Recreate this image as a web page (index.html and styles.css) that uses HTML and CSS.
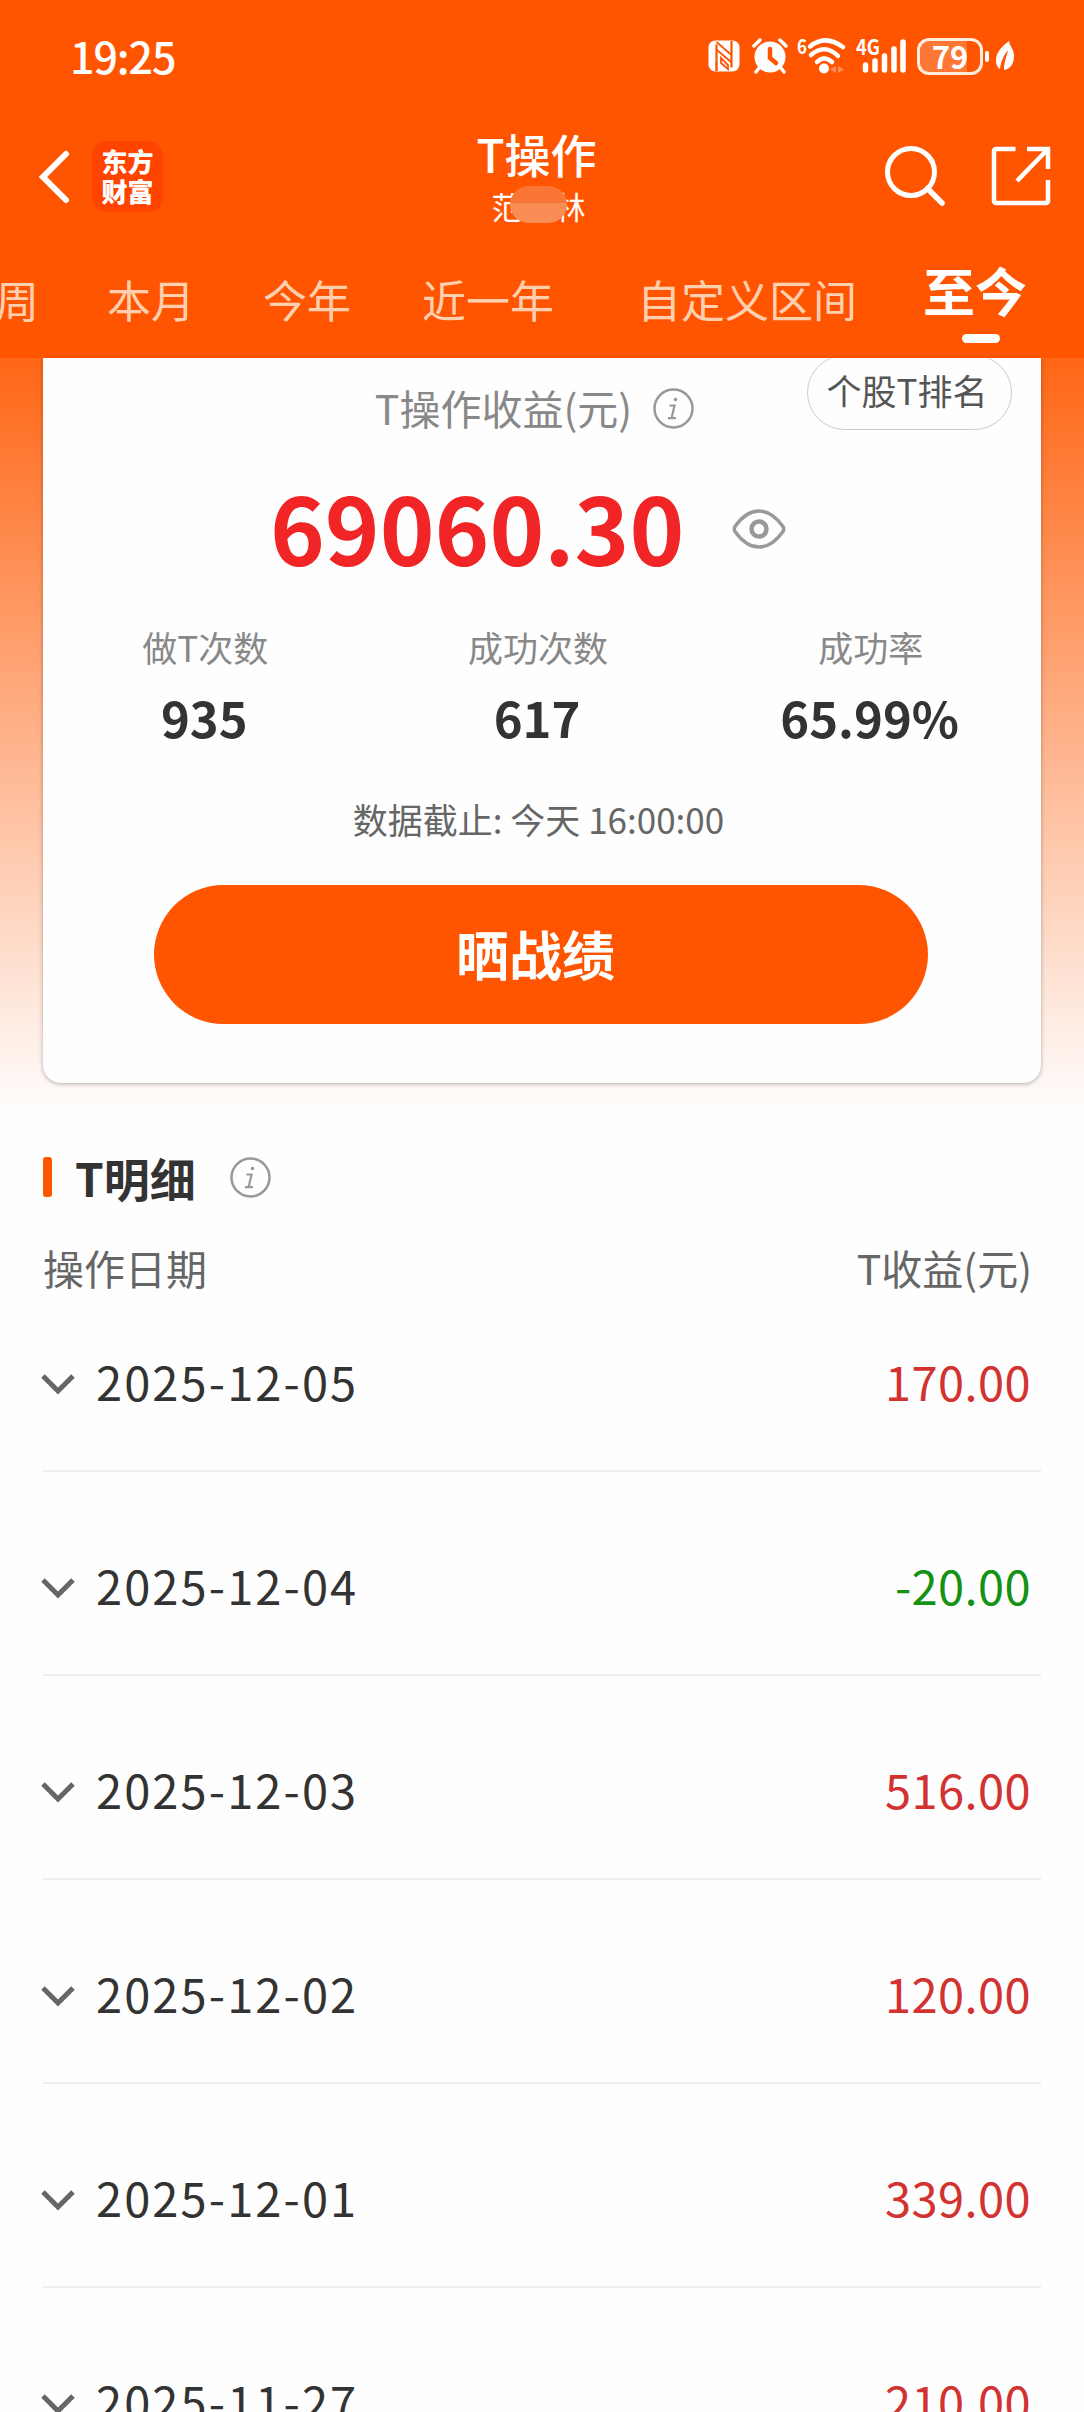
FILE: index.html
```
<!DOCTYPE html>
<html lang="zh-CN">
<head>
    <meta charset="UTF-8">
    <meta name="viewport" content="width=device-width, initial-scale=1.0">
    <title>T操作</title>
    <link rel="stylesheet" href="styles.css">
</head>
<body>
    <header class="header">
        <div class="status-bar">
            <div class="time">19:25</div>
            <div class="status-icons">
                <svg class="nfc" width="32" height="32" viewBox="0 0 32 32">
                    <rect x="0.5" y="0.5" width="31" height="31" rx="7" fill="#fff"/>
                    <path d="M8.500 31V4.500M23.500 1v26.500" fill="none" stroke="#ff5500" stroke-width="2.200"/>
                    <path d="M8.500 2L23.500 15M8.500 9.500L23.500 22.500M8.500 31V22M13 18l7 7v4l-7-6z" fill="none" stroke="#ff5500" stroke-width="1.800"/>
                </svg>
                <svg class="alarm" width="36" height="36" viewBox="0 0 36 36">
                    <circle cx="18" cy="19" r="15.5" fill="#fff"/>
                    <path d="M2 8l6-6M34 8l-6-6M7 30l-3 4M29 30l3 4" stroke="#fff" stroke-width="3.5" stroke-linecap="round"/>
                    <path d="M18 11v9l6 5" fill="none" stroke="#ff5500" stroke-width="4.500" stroke-linecap="round"/>
                </svg>
                <svg class="wifi" width="50" height="36" viewBox="0 0 50 36">
                    <text x="0" y="16" font-size="20" font-weight="bold" fill="#fff" textLength="10" lengthAdjust="spacingAndGlyphs">6</text>
                    <path d="M13 8.500Q28 -4 46 9M14 17Q28 5 41 18M20 24Q27 17 35 24" fill="none" stroke="#fff" stroke-width="4.500" stroke-linecap="round"/>
                    <circle cx="27" cy="30.500" r="5" fill="#fff"/>
                    <path d="M39 28v7l-6-3.500zM41 28v7l6-3.500z" fill="#ff9158"/>
                </svg>
                <svg class="signal" width="50" height="36" viewBox="0 0 50 36">
                    <text x="0" y="17" font-size="21" font-weight="bold" fill="#fff" textLength="24" lengthAdjust="spacingAndGlyphs">4G</text>
                    <path d="M9.500 27v5M19 23v9M28.500 18v14M38 11v21M47 4v28" stroke="#fff" stroke-width="5.500" stroke-linecap="round"/>
                </svg>
                <div class="battery">79</div>
                <div class="battery-nub"></div>
                <svg class="leaf" width="18" height="30" viewBox="0 0 18 30">
                    <path d="M13 0C4 7 0 12 0 20c0 4 2 7 4 8C5 20 8 14 12 9 11 15 8 20 8 29c6-1 10-6 10-14C18 8 14 6 13 0z" fill="#fff"/>
                </svg>
            </div>
        </div>

        <div class="nav-bar">
            <div class="nav-left">
                <svg width="32" height="54" viewBox="0 0 32 54">
                    <path d="M27 4L4 27l23 23" fill="none" stroke="#fff" stroke-width="6" stroke-linecap="round"/>
                </svg>
                <div class="app-logo"><span>东方</span><span>财富</span></div>
            </div>
            <div class="nav-title">
                <h1>T操作</h1>
                <div class="user-name"><span>范</span><span class="mosaic"></span><span>林</span></div>
            </div>
            <div class="nav-right">
                <svg width="62" height="62" viewBox="0 0 62 62">
                    <circle cx="27" cy="27" r="23.500" fill="none" stroke="#fff" stroke-width="5"/>
                    <path d="M43.500 43.500L58 58" stroke="#fff" stroke-width="5.500" stroke-linecap="round"/>
                </svg>
                <svg width="58" height="58" viewBox="0 0 58 58">
                    <path d="M23.500 2H4a2 2 0 0 0-2 2v50a2 2 0 0 0 2 2h50a2 2 0 0 0 2-2V33M35 2h21v20M56 2L25 34" fill="none" stroke="#fff" stroke-width="4.500"/>
                </svg>
            </div>
        </div>

        <nav class="tabs">
            <a class="tab">周</a>
            <a class="tab">本月</a>
            <a class="tab">今年</a>
            <a class="tab tab-year">近一年</a>
            <a class="tab tab-custom">自定义区间</a>
            <a class="tab active">至今</a>
        </nav>
    </header>

    <main class="content">
        <section class="card">
            <a class="rank-btn">个股T排名</a>
            <div class="card-title">
                <span>T操作收益(元)</span>
                <svg class="info" width="41" height="41" viewBox="0 0 41 41">
                    <circle cx="20.500" cy="20.500" r="19" fill="none" stroke="#999" stroke-width="2.500"/>
                    <circle cx="22.500" cy="11.500" r="1.800" fill="#999"/>
                    <path d="M16.500 17.500h5l-2.500 11q-.5 2 4 1.500M15 30.200h5" fill="none" stroke="#999" stroke-width="2.200"/>
                </svg>
            </div>
            <div class="total">
                <span>69060.30</span>
                <svg width="54" height="40" viewBox="0 0 54 40">
                    <path d="M3 17.500Q14 2 27 2t24 15.500q1.500 2.500 0 5Q40 38 27 38T3 22.500q-1.500-2.500 0-5z" fill="none" stroke="#999" stroke-width="3.500"/>
                    <circle cx="27" cy="20" r="7.500" fill="none" stroke="#999" stroke-width="4.500"/>
                </svg>
            </div>
            <div class="stats">
                <div class="stat"><span class="label">做T次数</span><span class="value">935</span></div>
                <div class="stat"><span class="label">成功次数</span><span class="value">617</span></div>
                <div class="stat"><span class="label">成功率</span><span class="value">65.99%</span></div>
            </div>
            <div class="deadline">数据截止: 今天 16:00:00</div>
            <div class="share-btn">晒战绩</div>
        </section>

        <section class="detail">
            <div class="detail-title">
                <h2>T明细</h2>
                <svg class="info" width="41" height="41" viewBox="0 0 41 41">
                    <circle cx="20.500" cy="20.500" r="19" fill="none" stroke="#999" stroke-width="2.500"/>
                    <circle cx="22.500" cy="11.500" r="1.800" fill="#999"/>
                    <path d="M16.500 17.500h5l-2.500 11q-.5 2 4 1.500M15 30.200h5" fill="none" stroke="#999" stroke-width="2.200"/>
                </svg>
            </div>
            <div class="detail-head">
                <span>操作日期</span>
                <span>T收益(元)</span>
            </div>
            <div class="row">
                <svg class="arrow" width="34" height="22" viewBox="0 0 34 22"><path d="M2 3l15 15L32 3"/></svg>
                <span class="date">2025-12-05</span>
                <span class="amount up">170.00</span>
            </div>
            <div class="row">
                <svg class="arrow" width="34" height="22" viewBox="0 0 34 22"><path d="M2 3l15 15L32 3"/></svg>
                <span class="date">2025-12-04</span>
                <span class="amount down">-20.00</span>
            </div>
            <div class="row">
                <svg class="arrow" width="34" height="22" viewBox="0 0 34 22"><path d="M2 3l15 15L32 3"/></svg>
                <span class="date">2025-12-03</span>
                <span class="amount up">516.00</span>
            </div>
            <div class="row">
                <svg class="arrow" width="34" height="22" viewBox="0 0 34 22"><path d="M2 3l15 15L32 3"/></svg>
                <span class="date">2025-12-02</span>
                <span class="amount up">120.00</span>
            </div>
            <div class="row">
                <svg class="arrow" width="34" height="22" viewBox="0 0 34 22"><path d="M2 3l15 15L32 3"/></svg>
                <span class="date">2025-12-01</span>
                <span class="amount up">339.00</span>
            </div>
            <div class="row">
                <svg class="arrow" width="34" height="22" viewBox="0 0 34 22"><path d="M2 3l15 15L32 3"/></svg>
                <span class="date">2025-11-27</span>
                <span class="amount up">210.00</span>
            </div>
        </section>
    </main>
</body>
</html>
```
FILE: styles.css
```
* {
    margin: 0;
    padding: 0;
    box-sizing: border-box;
}

body {
    width: 1084px;
    height: 2412px;
    overflow: hidden;
    background: #fefefe;
    color: #333;
    font-family: "Noto Sans CJK SC", "Noto Sans", sans-serif;
}

svg {
    display: block;
    flex: none;
    overflow: visible;
}

/* header */
.header {
    height: 358px;
    background: #ff5500;
    color: #fff;
    overflow: hidden;
}

.status-bar {
    display: flex;
    justify-content: space-between;
    height: 110px;
    padding: 25px 70px 0 70px;
}

.time {
    font-size: 43px;
    font-weight: 500;
    line-height: 60px;
    letter-spacing: -1.1px;
}

.status-icons {
    display: flex;
    align-items: center;
    height: 62px;
}

.alarm {
    margin-left: 12px;
}

.wifi {
    margin-left: 9px;
}

.signal {
    margin-left: 9px;
}

.battery {
    width: 66px;
    height: 37px;
    margin-left: 11px;
    border: 3px solid #ffeedd;
    border-radius: 12px;
    background: linear-gradient(to right, #ff7735 79%, #ff5500 79%);
    font-size: 31px;
    font-weight: 700;
    line-height: 30px;
    text-align: center;
}

.battery-nub {
    width: 4px;
    height: 11px;
    margin: 0 7px 0 2px;
    border-radius: 2px;
    background: #fff;
}

.nav-bar {
    display: grid;
    grid-template-columns: 300px 1fr 300px;
    height: 138px;
    padding: 0 34px 0 39px;
}

.nav-left {
    display: flex;
    align-items: center;
    height: 134px;
    gap: 21px;
}

.app-logo {
    display: flex;
    flex-direction: column;
    width: 71px;
    height: 71px;
    margin-top: -2px;
    padding-top: 5px;
    border-radius: 15px;
    background: #ff4400;
    font-size: 26px;
    font-weight: 900;
    line-height: 30px;
    text-align: center;
}

.nav-title {
    text-align: center;
    padding-right: 16px;
}

.nav-title h1 {
    margin-top: 15px;
    font-size: 46px;
    font-weight: 500;
    line-height: 56px;
}

.user-name {
    position: relative;
    display: flex;
    justify-content: center;
    gap: 32px;
    left: 2px;
    font-size: 31px;
    line-height: 40px;
    margin-top: 5px;
}

.mosaic {
    position: absolute;
    left: 50%;
    top: 0;
    width: 57px;
    height: 37px;
    margin-left: -29px;
    border-radius: 19px;
    background: linear-gradient(#fb7537 45%, #f88d55 45%);
}

.nav-right {
    display: flex;
    justify-content: flex-end;
    gap: 46px;
    padding-top: 35px;
}

.nav-right svg:last-child {
    margin-top: 2px;
}

.tabs {
    display: flex;
    gap: 68px;
    margin-left: -5px;
    white-space: nowrap;
}

.tab {
    font-size: 44px;
    line-height: 64px;
    padding-top: 19px;
    color: #ffd0b0;
}

.tab-year {
    margin-left: 3px;
}

.tab-custom {
    margin-left: 15px;
}

.tab.active {
    position: relative;
    margin-left: -2px;
    padding-top: 10px;
    font-size: 52px;
    font-weight: 700;
    color: #fff;
}

.tab.active::after {
    content: "";
    position: absolute;
    left: 39px;
    top: 86px;
    width: 38px;
    height: 9px;
    border-radius: 5px;
    background: #fff;
}

/* summary card */
.content {
    height: 2054px;
    overflow: hidden;
    background: linear-gradient(#ff6616, #fefefe 757px);
}

.card {
    position: relative;
    width: 998px;
    height: 725px;
    margin: 0 auto;
    padding-top: 16px;
    border-radius: 0 0 18px 18px;
    background: #fefefe;
    box-shadow: 0 1px 4px rgba(0, 0, 0, 0.3);
}

.rank-btn {
    position: absolute;
    right: 29px;
    top: -3px;
    width: 205px;
    height: 75px;
    padding-right: 5px;
    border: 1.5px solid #ccc;
    border-radius: 38px;
    font-size: 35px;
    line-height: 68px;
    text-align: center;
    color: #555;
}

.card-title {
    display: flex;
    align-items: center;
    justify-content: center;
    gap: 21px;
    height: 68px;
    padding-right: 15px;
    font-size: 41px;
    color: #888;
}

.card-title span {
    line-height: 60px;
    margin-top: -3px;
}

.total {
    display: flex;
    align-items: center;
    gap: 48px;
    height: 120px;
    margin-top: 28px;
    padding-left: 227px;
    font-size: 93px;
    font-weight: 700;
    line-height: 110px;
    color: #f12525;
}

.total span {
    margin-top: -8px;
}

.total svg {
    margin-top: -3px;
}

.stats {
    display: grid;
    grid-template-columns: repeat(3, 1fr);
    margin: 33px 4px 0 -4px;
    text-align: center;
}

.stat {
    display: flex;
    flex-direction: column;
}

.label {
    font-size: 35px;
    line-height: 48px;
    color: #888;
}

.value {
    margin-top: 21px;
    padding-right: 2px;
    font-size: 49px;
    font-weight: 700;
    line-height: 50px;
}

.deadline {
    margin: 53px 7px 0 0;
    font-size: 35px;
    line-height: 48px;
    text-align: center;
    color: #666;
}

.share-btn {
    width: 774px;
    height: 139px;
    margin: 42px 0 0 111px;
    padding-right: 11px;
    border-radius: 70px;
    background: #ff5500;
    font-size: 53px;
    font-weight: 700;
    line-height: 137px;
    text-align: center;
    color: #fff;
}

/* detail list */
.detail {
    margin: 0 43px;
    padding-top: 67px;
}

.detail-title {
    display: flex;
    align-items: center;
    height: 54px;
}

.detail-title::before {
    content: "";
    width: 9px;
    height: 40px;
    margin-right: 23px;
    border-radius: 3px;
    background: #ff5500;
}

.detail-title h2 {
    margin-right: 34px;
    font-size: 46px;
    line-height: 50px;
}

.detail-head {
    display: flex;
    justify-content: space-between;
    margin-top: 35px;
    padding-right: 9px;
    font-size: 41px;
    line-height: 56px;
    color: #666;
}

.row {
    display: flex;
    align-items: center;
    height: 204px;
    padding: 29px 10px 0 0;
    border-bottom: 2px solid #eee;
    font-size: 47px;
    line-height: 60px;
}

.detail-head + .row {
    height: 177px;
    padding-top: 2px;
}

.arrow {
    margin: 0 0 0 -2px;
}

.arrow path {
    fill: none;
    stroke: #666;
    stroke-width: 5;
}

.date {
    margin: -5px 0 0 21px;
    letter-spacing: 2.1px;
}

.amount {
    margin: -5px 0 0 auto;
    letter-spacing: 0.4px;
}

.up {
    color: #d23230;
}

.down {
    color: #149214;
}
```
